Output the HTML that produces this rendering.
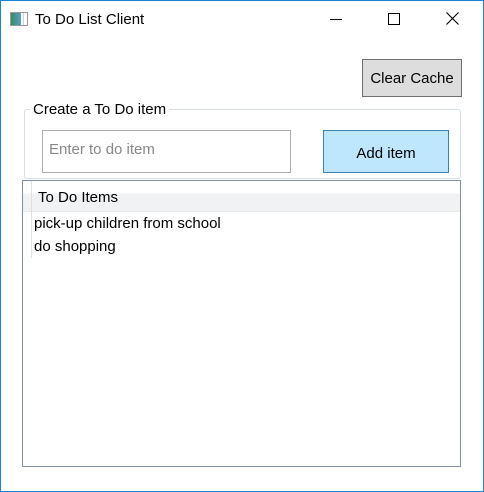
<!DOCTYPE html>
<html><head><style>
body{margin:0;width:484px;height:492px;overflow:hidden;font-family:"Liberation Sans",sans-serif;font-size:15px;color:#000}
.win{position:absolute;left:0;top:0;width:482px;height:490px;border:1px solid #1883d7;background:#fff}
.a{position:absolute}
</style></head><body>
<div class="win"></div>
<div class="a" style="left:10px;top:12px;width:16px;height:12px;border:1px solid #999;background:linear-gradient(90deg,#3a8a6a 0,#5aa0c0 10px,#fff 10px,#fff 12px,#9ab 12px,#fff 13px)"></div>
<div class="a" style="left:35px;top:11px;font-size:15px">To Do List Client</div>
<div class="a" style="left:330px;top:19px;width:12px;height:1px;background:#000"></div>
<div class="a" style="left:388px;top:13px;width:10px;height:10px;border:1px solid #000"></div>
<svg class="a" style="left:446px;top:12px" width="13" height="13"><path d="M0.5 0.5L12.5 12.5M12.5 0.5L0.5 12.5" stroke="#000" stroke-width="1.1"/></svg>
<div class="a" style="left:362px;top:59px;width:98px;height:36px;border:1px solid #707070;background:#ddd;text-align:center;line-height:38px">Clear Cache</div>
<div class="a" style="left:24px;top:109px;width:435px;height:68px;border:1px solid #d5dfe5;border-radius:3px"></div>
<div class="a" style="left:30px;top:101px;padding:0 3px;background:#fff">Create a To Do item</div>
<div class="a" style="left:42px;top:130px;width:247px;height:41px;border:1px solid #abadb3;background:#fff;color:#888;box-sizing:content-box"><span style="position:absolute;left:6px;top:10px">Enter to do item</span></div>
<div class="a" style="left:323px;top:130px;width:124px;height:41px;border:1px solid #3c7fb1;background:#bee6fd;text-align:center;line-height:45px">Add item</div>
<div class="a" style="left:22px;top:180px;width:437px;height:285px;border:1px solid #828fa0;background:#fff"></div>
<div class="a" style="left:23px;top:181px;width:437px;height:31px;background:linear-gradient(#fff 0,#fff 12px,#f1f2f4 13px,#f1f2f4 30px,#e2e3e5 31px)"></div>
<div class="a" style="left:23px;top:181px;width:8px;height:77px;border-right:1px solid #e0e0e0"></div>
<div class="a" style="left:38px;top:189px">To Do Items</div>
<div class="a" style="left:34px;top:215px">pick-up children from school</div>
<div class="a" style="left:34px;top:238px">do shopping</div>
</body></html>
